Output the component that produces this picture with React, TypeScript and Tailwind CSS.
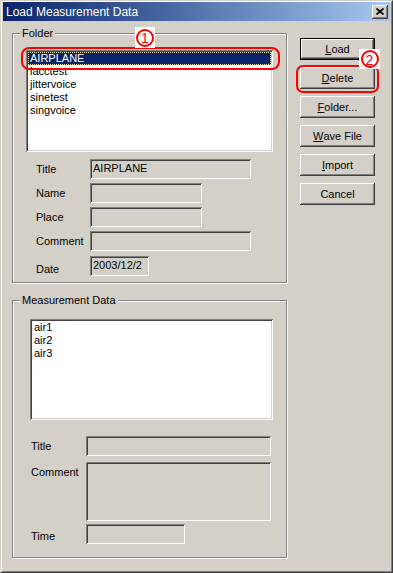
import type { ReactNode } from 'react';

const font = { fontFamily: '"Liberation Sans", Arial, sans-serif' };

const raised =
  'shadow-[inset_-1px_-1px_0_#404040,inset_1px_1px_0_#ffffff,inset_-2px_-2px_0_#808080,inset_2px_2px_0_#d4d0c8]';
const sunken =
  'shadow-[inset_1px_1px_0_#808080,inset_-1px_-1px_0_#ffffff,inset_2px_2px_0_#404040,inset_-2px_-2px_0_#d4d0c8]';

function GroupBox({ label, className, children }: { label: string; className: string; children: ReactNode }) {
  return (
    <div
      className={`relative border border-[#808080] shadow-[1px_1px_0_#ffffff,inset_1px_1px_0_#ffffff] ${className}`}
    >
      <span className="absolute -top-[8px] left-[7px] bg-[#d4d0c8] px-[2px] text-[11px] leading-[14px] text-black">
        {label}
      </span>
      {children}
    </div>
  );
}

function Field({ w, h = 'h-[20px]', value }: { w: string; h?: string; value?: string }) {
  return (
    <div className={`${w} ${h} shrink-0 ${sunken} bg-[#d4d0c8] px-[3px] pt-[3px] text-[11px] leading-[13px] text-black`}>
      {value}
    </div>
  );
}

function Btn({ children, isDefault }: { children: ReactNode; isDefault?: boolean }) {
  return (
    <div
      role="button"
      className={`flex h-[22px] w-[75px] items-center justify-center bg-[#d4d0c8] text-[11px] font-normal text-black ${
        isDefault ? 'border border-black' : ''
      } ${raised}`}
    >
      {children}
    </div>
  );
}

function Mark({ n, className }: { n: string; className: string }) {
  return (
    <div className={`absolute flex items-center justify-center bg-white ${className}`}>
      <div className="flex h-[18px] w-[18px] items-center justify-center rounded-full border-2 border-[#ff0000] pt-px text-[14px] leading-none text-[#ff0000]">
        {n}
      </div>
    </div>
  );
}

export default function App() {
  const folders = ['AIRPLANE', 'iacctest', 'jittervoice', 'sinetest', 'singvoice'];

  return (
    <div
      style={font}
      className="relative h-[573px] w-[393px] overflow-hidden border border-t-[#d4d0c8] border-l-[#d4d0c8] border-r-[#404040] border-b-[#404040] bg-[#d4d0c8]"
    >
      <div className="flex h-full flex-col border border-t-white border-l-white border-r-[#808080] border-b-[#808080] px-px">
        {/* Title bar */}
        <div className="flex h-[19px] items-center justify-between bg-linear-to-r from-[#0a246a] to-[#a6caf0] pl-[3px] pr-[2px]">
          <span className="text-[12px] leading-[14px] text-white">Load Measurement Data</span>
          <div className={`flex h-[14px] w-[16px] items-center justify-center bg-[#d4d0c8] ${raised}`}>
            <svg width="8" height="7" viewBox="0 0 8 7">
              <path d="M0.5 0.5L7.5 6.5M7.5 0.5L0.5 6.5" stroke="#000" strokeWidth="1.6" />
            </svg>
          </div>
        </div>

        <div className="flex gap-[13px] pl-[9px] pt-[12px]">
          <div className="flex w-[275px] flex-col gap-[17px]">
            {/* Folder */}
            <GroupBox label="Folder" className="h-[250px] pl-[13px] pt-[16px]">
              <div className={`h-[102px] w-[247px] bg-white p-[2px] ${sunken}`}>
                {folders.map((f, i) => (
                  <div
                    key={f}
                    className={`h-[13px] text-[11px] leading-[11px] ${
                      i === 0
                        ? 'border border-dotted border-[#e8e0b0] bg-[#0a246a] pl-[1px] text-white'
                        : 'pl-[2px] leading-[13px] text-black'
                    }`}
                  >
                    {f}
                  </div>
                ))}
              </div>
              <div className="mt-[7px] flex flex-col gap-[4px] text-[11px] text-black">
                <div className="flex items-center">
                  <span className="w-[64px] shrink-0 pl-[10px]">Title</span>
                  <Field w="w-[161px]" value="AIRPLANE" />
                </div>
                <div className="flex items-center">
                  <span className="w-[64px] shrink-0 pl-[10px]">Name</span>
                  <Field w="w-[112px]" />
                </div>
                <div className="flex items-center">
                  <span className="w-[64px] shrink-0 pl-[10px]">Place</span>
                  <Field w="w-[112px]" />
                </div>
                <div className="flex items-center">
                  <span className="w-[64px] shrink-0 pl-[10px]">Comment</span>
                  <Field w="w-[161px]" />
                </div>
                <div className="flex items-center">
                  <span className="w-[64px] shrink-0 pl-[10px] pt-[6px]">Date</span>
                  <Field w="w-[59px]" value="2003/12/2" />
                </div>
              </div>
            </GroupBox>

            {/* Measurement Data */}
            <GroupBox label="Measurement Data" className="h-[258px] pl-[17px] pt-[18px]">
              <div className={`h-[101px] w-[243px] bg-white px-[4px] pt-[2px] ${sunken}`}>
                {['air1', 'air2', 'air3'].map((m) => (
                  <div key={m} className="h-[13px] text-[11px] leading-[13px] text-black">
                    {m}
                  </div>
                ))}
              </div>
              <div className="mt-[16px] flex flex-col text-[11px] text-black">
                <div className="flex items-center">
                  <span className="w-[56px] shrink-0 pl-px">Title</span>
                  <Field w="w-[185px]" />
                </div>
                <div className="mt-[6px] flex items-start">
                  <span className="w-[56px] shrink-0 pl-px pt-[2px]">Comment</span>
                  <Field w="w-[185px]" h="h-[59px]" />
                </div>
                <div className="mt-[3px] flex items-center">
                  <span className="w-[56px] shrink-0 pl-px pt-[4px]">Time</span>
                  <Field w="w-[99px]" />
                </div>
              </div>
            </GroupBox>
          </div>

          {/* Buttons */}
          <div className="flex flex-col gap-[7px] pt-[5px]">
            <Btn isDefault>
              <span className="underline">L</span>oad
            </Btn>
            <Btn>
              <span className="underline">D</span>elete
            </Btn>
            <Btn>
              <span className="underline">F</span>older...
            </Btn>
            <Btn>
              <span className="underline">W</span>ave File
            </Btn>
            <Btn>
              <span className="underline">I</span>mport
            </Btn>
            <Btn>Cancel</Btn>
          </div>
        </div>
      </div>

      {/* Annotations */}
      <div className="absolute left-[20px] top-[46px] h-[23px] w-[259px] rounded-[8px] border-2 border-[#ff0000]" />
      <Mark n="1" className="left-[134px] top-[26px] h-[21px] w-[20px]" />
      <div className="absolute left-[295px] top-[64px] h-[28px] w-[83px] rounded-[7px] border-2 border-[#ff0000]" />
      <Mark n="2" className="left-[358px] top-[48px] h-[20px] w-[21px]" />
    </div>
  );
}
